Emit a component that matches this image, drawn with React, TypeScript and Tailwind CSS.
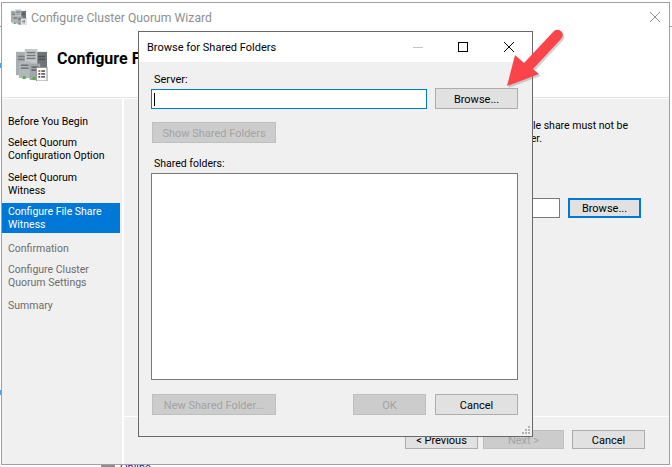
import React from 'react';

const font = 'font-["Roboto",sans-serif]';

const WinButton: React.FC<{ label: string; className?: string; disabled?: boolean; focused?: boolean }> = ({ label, className = '', disabled, focused }) => (
    <div
        className={`flex items-center justify-center pt-px text-[11px] leading-none ${className} ${
            disabled
                ? 'bg-[#cccccc] border border-[#bfbfbf] text-[#a3a3a3]'
                : focused
                  ? 'bg-[#e1e1e1] border-2 border-[#0078d7] text-black'
                  : 'bg-[#e1e1e1] border border-[#adadad] text-black'
        }`}
    >
        {label}
    </div>
);

const ServerIcon: React.FC<{ className?: string }> = ({ className }) => (
    <svg viewBox="0 0 34 34" className={className}>
        <rect x="1" y="4" width="11" height="24" fill="#a8adb0" />
        <rect x="22" y="4" width="11" height="22" fill="#6f7477" />
        <rect x="10" y="1" width="13" height="25" fill="#c4c8ca" />
        <rect x="12" y="4" width="9" height="1.5" fill="#74797c" />
        <rect x="12" y="7" width="9" height="1.5" fill="#74797c" />
        <rect x="12" y="10" width="9" height="1.5" fill="#74797c" />
        <rect x="3" y="8" width="7" height="1.5" fill="#74797c" />
        <rect x="3" y="11" width="7" height="1.5" fill="#74797c" />
        <rect x="24" y="8" width="7" height="1.5" fill="#4d5154" />
        <rect x="24" y="11" width="7" height="1.5" fill="#4d5154" />
        <rect x="4" y="14" width="12" height="17" fill="#b3b7b9" />
        <rect x="6" y="17" width="8" height="1.5" fill="#6c7174" />
        <rect x="6" y="20" width="8" height="1.5" fill="#6c7174" />
        <rect x="15" y="16" width="11" height="17" fill="#a2a7a9" />
        <rect x="17" y="19" width="7" height="1.5" fill="#5c6063" />
        <rect x="17" y="22" width="7" height="1.5" fill="#5c6063" />
        <rect x="8" y="29" width="3" height="3" fill="#4fae3c" />
        <rect x="18" y="30" width="3" height="3" fill="#4fae3c" />
        <rect x="22" y="20" width="11" height="14" fill="#ffffff" stroke="#8a8f92" strokeWidth="1" />
        <rect x="24" y="23" width="2" height="1.5" fill="#c0392b" />
        <rect x="27" y="23" width="4" height="1.5" fill="#444444" />
        <rect x="24" y="26" width="2" height="1.5" fill="#333333" />
        <rect x="27" y="26" width="4" height="1.5" fill="#444444" />
        <rect x="24" y="29" width="2" height="1.5" fill="#333333" />
        <rect x="27" y="29" width="4" height="1.5" fill="#444444" />
    </svg>
);

const NavItem: React.FC<{ lines: string[]; state?: 'done' | 'active' | 'off'; className?: string }> = ({ lines, state = 'done', className = '' }) => (
    <div
        className={`pl-[6px] text-[10.5px] leading-[13px] ${className} ${
            state === 'active' ? 'bg-[#0078d7] text-white py-[2px] mr-[2px]' : state === 'off' ? 'text-[#6d6d6d]' : 'text-black'
        }`}
    >
        {lines.map((line) => (
            <div key={line} className="whitespace-nowrap">{line}</div>
        ))}
    </div>
);

const BrowseDialog: React.FC = () => (
    <div className="absolute left-[138px] top-[31px] w-[395px] h-[406px] border border-[#696969] bg-[#f0f0f0] flex flex-col">
        <div className="h-[30px] bg-white flex items-center pl-[8px] pr-[18px] text-[11px] text-black shrink-0">
            <span className="flex-1 pt-[2px]">Browse for Shared Folders</span>
            <div className="w-[10px] h-px bg-[#c4c4c4] mr-[35px]" />
            <div className="w-[10px] h-[10px] border border-black mr-[36px]" />
            <svg viewBox="0 0 10 10" className="w-[10px] h-[10px]">
                <path d="M0 0L10 10M10 0L0 10" stroke="#000" strokeWidth="1" />
            </svg>
        </div>
        <div className="flex-1 relative flex flex-col pl-[12px] pr-[13px] pt-[11px]">
            <div className="text-[11px] leading-[14px] pl-[3px] text-black">Server:</div>
            <div className="flex gap-[8px] mt-px h-[21px]">
                <div className="w-[276px] h-[20px] mt-px bg-white border border-[#0078d7] flex items-center pl-[2px]">
                    <div className="w-px h-[13px] bg-black" />
                </div>
                <WinButton label="Browse..." className="w-[83px] h-[21px]" />
            </div>
            <WinButton label="Show Shared Folders" disabled className="w-[124px] h-[21px] mt-[13px] ml-px" />
            <div className="text-[10.5px] leading-[14px] pl-[3px] mt-[14px] text-black">Shared folders:</div>
            <div className="w-[367px] h-[207px] mt-[2px] bg-white border border-[#7a7a7a]" />
            <div className="flex mt-[14px] ml-px">
                <WinButton label="New Shared Folder..." disabled className="w-[124px] h-[21px]" />
                <WinButton label="OK" disabled className="w-[73px] h-[21px] ml-[77px]" />
                <WinButton label="Cancel" className="w-[83px] h-[21px] ml-[9px]" />
            </div>
            <svg viewBox="0 0 10 10" className="absolute right-[1px] bottom-[1px] w-[10px] h-[10px]">
                <path d="M7 1h2v2H7zM4 4h2v2H4zM7 4h2v2H7zM1 7h2v2H1zM4 7h2v2H4zM7 7h2v2H7z" fill="#b5b5b5" />
            </svg>
        </div>
    </div>
);

export default function App() {
    return (
        <div className={`relative w-[672px] h-[467px] bg-white overflow-hidden ${font}`}>
            {/* bits of the desktop behind the wizard */}
            <div className="absolute left-0 top-[26px] w-px h-px bg-[#999999]" />
            <div className="absolute left-0 top-[63px] w-px h-[5px] bg-[#4aa3e8]" />
            <div className="absolute left-0 top-[390px] w-px h-[5px] bg-[#4aa3e8]" />
            <div className="absolute left-[670px] top-[26px] w-[2px] h-px bg-[#999999]" />
            <div className="absolute left-[101px] top-[465px] w-[14px] h-[2px] bg-[#8a8f92]" />
            <div className="absolute left-[120px] top-[461px] text-[11px] leading-[14px] text-[#1a1a8c]">Online</div>

            {/* wizard window */}
            <div className="relative ml-px mt-[2px] w-[669px] h-[463px] border border-[#a0a0a0] bg-white flex flex-col">
                <div className="h-[28px] flex items-center pl-[8px] pr-[9px] shrink-0">
                    <ServerIcon className="w-[17px] h-[16px]" />
                    <span className="ml-[4px] flex-1 pt-[2px] text-[12.2px] text-[#8f8f8f]">Configure Cluster Quorum Wizard</span>
                    <svg viewBox="0 0 10 10" className="w-[10px] h-[10px]">
                        <path d="M0 0L10 10M10 0L0 10" stroke="#8f8f8f" strokeWidth="1" />
                    </svg>
                </div>
                <div className="h-[67px] flex items-start pl-[13px] pt-[17px] border-b border-[#e3e3e3] shrink-0">
                    <ServerIcon className="w-[33px] h-[33px]" />
                    <span className="ml-[9px] mt-px text-[16px] leading-[20px] font-bold text-black">Configure File Share Witness</span>
                </div>
                <div className="flex-1 flex pt-px min-h-0">
                    <div className="w-[120px] bg-[#f0f0f0] pt-[16px] flex flex-col">
                        <NavItem lines={['Before You Begin']} />
                        <NavItem lines={['Select Quorum', 'Configuration Option']} className="mt-[8px]" />
                        <NavItem lines={['Select Quorum', 'Witness']} className="mt-[9px]" />
                        <NavItem lines={['Configure File Share', 'Witness']} state="active" className="mt-[6px]" />
                        <NavItem lines={['Confirmation']} state="off" className="mt-[9px]" />
                        <NavItem lines={['Configure Cluster', 'Quorum Settings']} state="off" className="mt-[8px]" />
                        <NavItem lines={['Summary']} state="off" className="mt-[10px]" />
                    </div>
                    <div className="flex-1 ml-[2px] flex flex-col bg-[#f0f0f0]">
                        <div className="h-[318px] border-b border-white relative pt-[20px]">
                            <div className="text-[10.5px] leading-[13px] text-black">
                                <div className="text-right pr-[41px]">The witness file share must not be</div>
                                <div className="text-right pr-[127px]">on this cluster server.</div>
                            </div>
                            <div className="flex justify-end mt-[53px] pr-[28px] gap-[8px]">
                                <div className="w-[300px] h-[20px] bg-white border border-[#7a7a7a]" />
                                <WinButton label="Browse..." focused className="w-[73px] h-[20px]" />
                            </div>
                        </div>
                        <div className="flex justify-end pr-[24px] pt-[13px]">
                            <WinButton label="< Previous" className="w-[73px] h-[19px]" />
                            <WinButton label="Next >" disabled className="w-[81px] h-[19px] ml-[5px]" />
                            <WinButton label="Cancel" className="w-[73px] h-[19px] ml-[8px]" />
                        </div>
                    </div>
                </div>
            </div>

            <BrowseDialog />

            {/* annotation arrow */}
            <svg viewBox="0 0 672 467" className="absolute inset-0 w-[672px] h-[467px] pointer-events-none">
                <path d="M507 86L515 55L524 63L554 31Q558 28 562 32Q564 36 561 39L533 69L539 74Z" fill="#7a7a7a" opacity="0.35" transform="translate(1.5 2)" />
                <path d="M507 86L515 55L524 63L554 31Q558 28 562 32Q564 36 561 39L533 69L539 74Z" fill="#f9444a" />
            </svg>
        </div>
    );
}
